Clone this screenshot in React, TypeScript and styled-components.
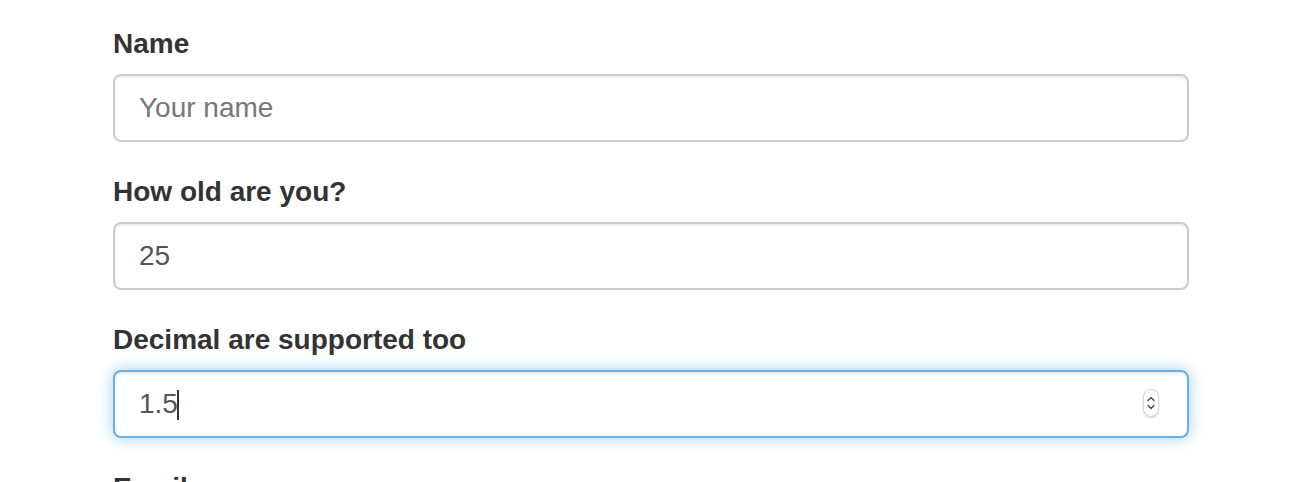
import styled, { createGlobalStyle } from 'styled-components';

const GlobalStyle = createGlobalStyle`
  html, body {
    margin: 0;
    padding: 0;
    background: #ffffff;
  }
  body {
    font-family: "Liberation Sans", Arial, Helvetica, sans-serif;
    color: #333333;
  }
  * {
    box-sizing: border-box;
  }
`;

const Page = styled.div`
  padding: 24px 0 0 113px;
  height: 482px;
  overflow: hidden;
`;

const Form = styled.form`
  width: 1076px;
`;

const FormGroup = styled.div`
  margin-bottom: 30px;
`;

const Label = styled.label`
  display: block;
  font-size: 28px;
  line-height: 40px;
  font-weight: 700;
  color: #333333;
  margin-bottom: 10px;
`;

const InputWrap = styled.div`
  position: relative;
`;

const Input = styled.input<{ $focused?: boolean }>`
  display: block;
  width: 100%;
  height: 68px;
  padding: 12px 24px;
  font-family: "Liberation Sans", Arial, Helvetica, sans-serif;
  font-size: 28px;
  line-height: 40px;
  color: #555555;
  background: #ffffff;
  border: 2px solid ${(p) => (p.$focused ? '#66afe9' : '#cccccc')};
  border-radius: 8px;
  outline: none;
  box-shadow: ${(p) =>
    p.$focused
      ? 'inset 0 2px 2px rgba(0,0,0,.075), 0 0 16px rgba(102,175,233,.6)'
      : 'inset 0 2px 2px rgba(0,0,0,.075)'};
  caret-color: transparent;
  -moz-appearance: textfield;

  &::placeholder {
    color: #777777;
    opacity: 1;
  }

  &::-webkit-inner-spin-button,
  &::-webkit-outer-spin-button {
    -webkit-appearance: none;
    margin: 0;
  }
`;

const Caret = styled.span<{ $left: number }>`
  position: absolute;
  top: 20px;
  left: ${(p) => p.$left}px;
  width: 2px;
  height: 30px;
  background: #333333;
`;

const Spinner = styled.span`
  position: absolute;
  right: 30px;
  top: 19px;
  width: 16px;
  height: 28px;
  border: 1px solid #d6d6d6;
  border-radius: 8px;
  background: #ffffff;
  box-shadow: 0 1px 2px rgba(0, 0, 0, 0.15);
  display: flex;
  align-items: center;
  justify-content: center;
`;

function SpinIcon() {
  return (
    <svg width="10" height="18" viewBox="0 0 10 18" fill="none">
      <path d="M2 6.5 L5 3.5 L8 6.5" stroke="#444" strokeWidth="1.4" strokeLinecap="round" strokeLinejoin="round" />
      <path d="M2 11.5 L5 14.5 L8 11.5" stroke="#444" strokeWidth="1.4" strokeLinecap="round" strokeLinejoin="round" />
    </svg>
  );
}

export default function App() {
  return (
    <>
      <GlobalStyle />
      <Page>
        <Form onSubmit={(e) => e.preventDefault()}>
          <FormGroup>
            <Label htmlFor="name">Name</Label>
            <Input id="name" type="text" placeholder="Your name" />
          </FormGroup>

          <FormGroup>
            <Label htmlFor="age">How old are you?</Label>
            <Input id="age" type="number" defaultValue={25} />
          </FormGroup>

          <FormGroup>
            <Label htmlFor="decimal">Decimal are supported too</Label>
            <InputWrap>
              <Input id="decimal" type="number" step="0.1" defaultValue={1.5} $focused />
              <Caret $left={64} />
              <Spinner>
                <SpinIcon />
              </Spinner>
            </InputWrap>
          </FormGroup>

          <FormGroup>
            <Label htmlFor="email">Email</Label>
            <Input id="email" type="email" />
          </FormGroup>
        </Form>
      </Page>
    </>
  );
}
